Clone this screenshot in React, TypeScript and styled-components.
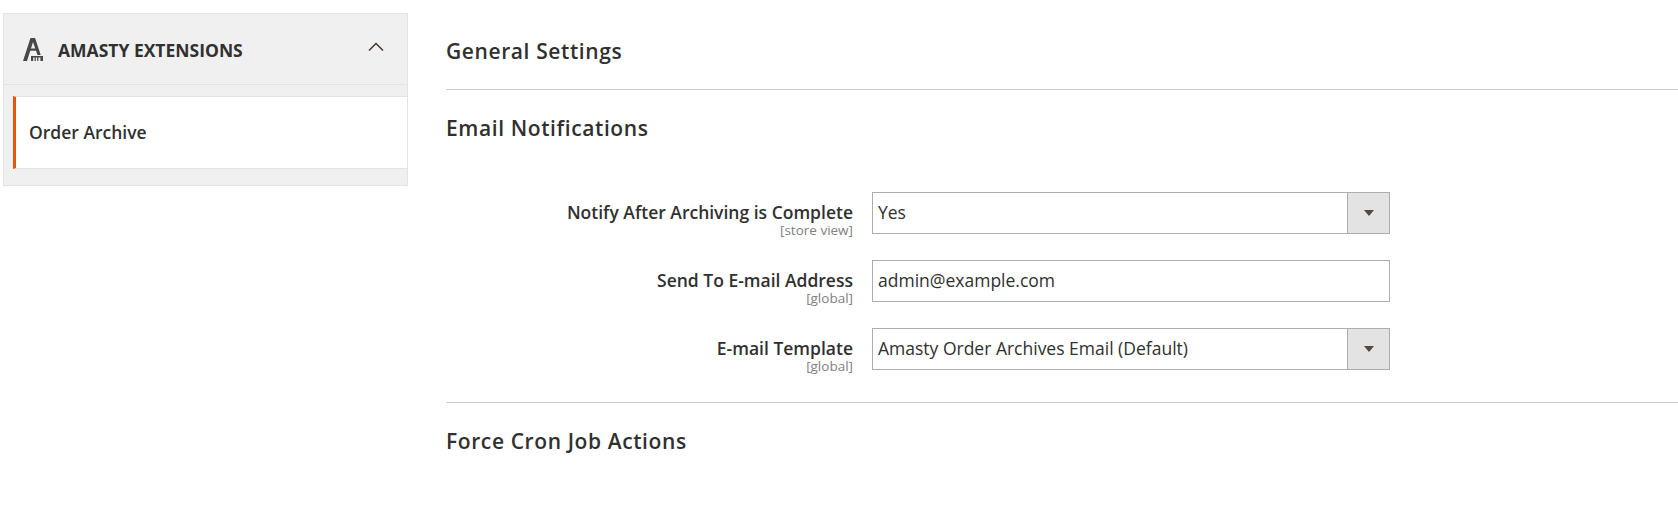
import React from 'react';
import styled, { createGlobalStyle } from 'styled-components';

const GlobalStyle = createGlobalStyle`
    html, body {
        margin: 0;
        padding: 0;
        background: #ffffff;
        font-family: 'Open Sans', 'Liberation Sans', sans-serif;
        color: #303030;
    }
`;

const Page = styled.div`
    display: flex;
    align-items: flex-start;
    width: 1678px;
    height: 517px;
    overflow: hidden;
    box-sizing: border-box;
    padding: 13px 0 0 3px;
`;

const Sidebar = styled.aside`
    width: 405px;
    flex: none;
    background: #f0f0f0;
    border: 1px solid #e3e3e3;
    box-sizing: border-box;
    padding-bottom: 16px;
`;

const SidebarHeader = styled.div`
    display: flex;
    align-items: center;
    height: 70px;
    padding: 0 23px 0 19px;
    border-bottom: 1px solid #e3e3e3;
    margin-bottom: 11px;
`;

const SidebarTitle = styled.div`
    flex: 1;
    margin-left: 15px;
    padding-top: 2px;
    font-size: 17.5px;
    font-weight: 700;
    color: #303030;
`;

const SidebarItem = styled.div`
    display: flex;
    align-items: center;
    height: 73px;
    margin-left: 9px;
    padding: 0 0 2px 13px;
    background: #ffffff;
    border-left: 3px solid #eb5202;
    border-top: 1px solid #e3e3e3;
    border-bottom: 1px solid #e3e3e3;
    box-sizing: border-box;
    font-size: 17.5px;
    font-weight: 600;
    color: #303030;
`;

const Main = styled.main`
    flex: 1;
    margin-left: 38px;
    margin-top: -13px;
`;

const SectionHeading = styled.h2<{ $height: number; $top?: number }>`
    display: flex;
    align-items: center;
    margin: 0;
    box-sizing: border-box;
    height: ${(props) => props.$height}px;
    padding-top: ${(props) => props.$top ?? 0}px;
    font-size: 21px;
    font-weight: 600;
    letter-spacing: 0.6px;
    color: #303030;
`;

const Divider = styled.div`
    height: 1px;
    background: #cccccc;
`;

const Fields = styled.div`
    display: flex;
    flex-direction: column;
    gap: 26px;
    padding-top: 27px;
    padding-bottom: 32px;
`;

const Row = styled.div`
    display: flex;
    align-items: flex-start;
    height: 42px;
`;

const LabelColumn = styled.div`
    width: 407px;
    flex: none;
    text-align: right;
    padding-top: 9px;
`;

const Label = styled.div`
    font-size: 17.5px;
    line-height: 22px;
    font-weight: 600;
    color: #303030;
`;

const Scope = styled.div`
    font-size: 13.5px;
    line-height: 14px;
    color: #808080;
`;

const Control = styled.div`
    display: flex;
    align-items: center;
    width: 518px;
    height: 42px;
    margin-left: 19px;
    box-sizing: border-box;
    border: 1px solid #adadad;
    background: #ffffff;
`;

const ControlValue = styled.div`
    flex: 1;
    padding: 0 0 2px 5px;
    font-size: 17.5px;
    color: #303030;
`;

const SelectButton = styled.div`
    display: flex;
    align-items: center;
    justify-content: center;
    width: 42px;
    height: 100%;
    background: #e3e3e3;
    border-left: 1px solid #adadad;
    box-sizing: border-box;
`;

const Arrow = styled.div`
    width: 0;
    height: 0;
    border-left: 5px solid transparent;
    border-right: 5px solid transparent;
    border-top: 6px solid #514943;
`;

const ChevronIcon = styled.svg`
    margin-bottom: 4px;
`;

function AmastyLogo() {
    return (
        <svg width="20" height="23" viewBox="0 0 20 23" aria-hidden="true">
            <path d="M7.5 0h4.6l5.6 17h-3.2L10 4 4 23H0z" fill="#484846" />
            <path d="M5.5 10.5h9v2.2h-9z" fill="#484846" />
            <path d="M8 18h12v5h-2.6v-3.4h-2V23h-1.2v-3.4h-1.4V23h-1.2v-3.4h-1.4V23H8z" fill="#484846" />
        </svg>
    );
}

function ChevronUp() {
    return (
        <ChevronIcon width="16" height="10" viewBox="0 0 16 10" aria-hidden="true">
            <path d="M1 8.5 8 1.5l7 7" fill="none" stroke="#41362f" strokeWidth="1.5" />
        </ChevronIcon>
    );
}

const fields = [
    { label: 'Notify After Archiving is Complete', scope: '[store view]', value: 'Yes', select: true },
    { label: 'Send To E-mail Address', scope: '[global]', value: 'admin@example.com', select: false },
    { label: 'E-mail Template', scope: '[global]', value: 'Amasty Order Archives Email (Default)', select: true },
];

export default function App() {
    return (
        <>
            <GlobalStyle />
            <Page>
                <Sidebar>
                    <SidebarHeader>
                        <AmastyLogo />
                        <SidebarTitle>AMASTY EXTENSIONS</SidebarTitle>
                        <ChevronUp />
                    </SidebarHeader>
                    <SidebarItem>Order Archive</SidebarItem>
                </Sidebar>
                <Main>
                    <SectionHeading $height={89} $top={13}>General Settings</SectionHeading>
                    <Divider />
                    <SectionHeading $height={75}>Email Notifications</SectionHeading>
                    <Fields>
                        {fields.map((field) => (
                            <Row key={field.label}>
                                <LabelColumn>
                                    <Label>{field.label}</Label>
                                    <Scope>{field.scope}</Scope>
                                </LabelColumn>
                                <Control>
                                    <ControlValue>{field.value}</ControlValue>
                                    {field.select && (
                                        <SelectButton>
                                            <Arrow />
                                        </SelectButton>
                                    )}
                                </Control>
                            </Row>
                        ))}
                    </Fields>
                    <Divider />
                    <SectionHeading $height={75}>Force Cron Job Actions</SectionHeading>
                </Main>
            </Page>
        </>
    );
}
